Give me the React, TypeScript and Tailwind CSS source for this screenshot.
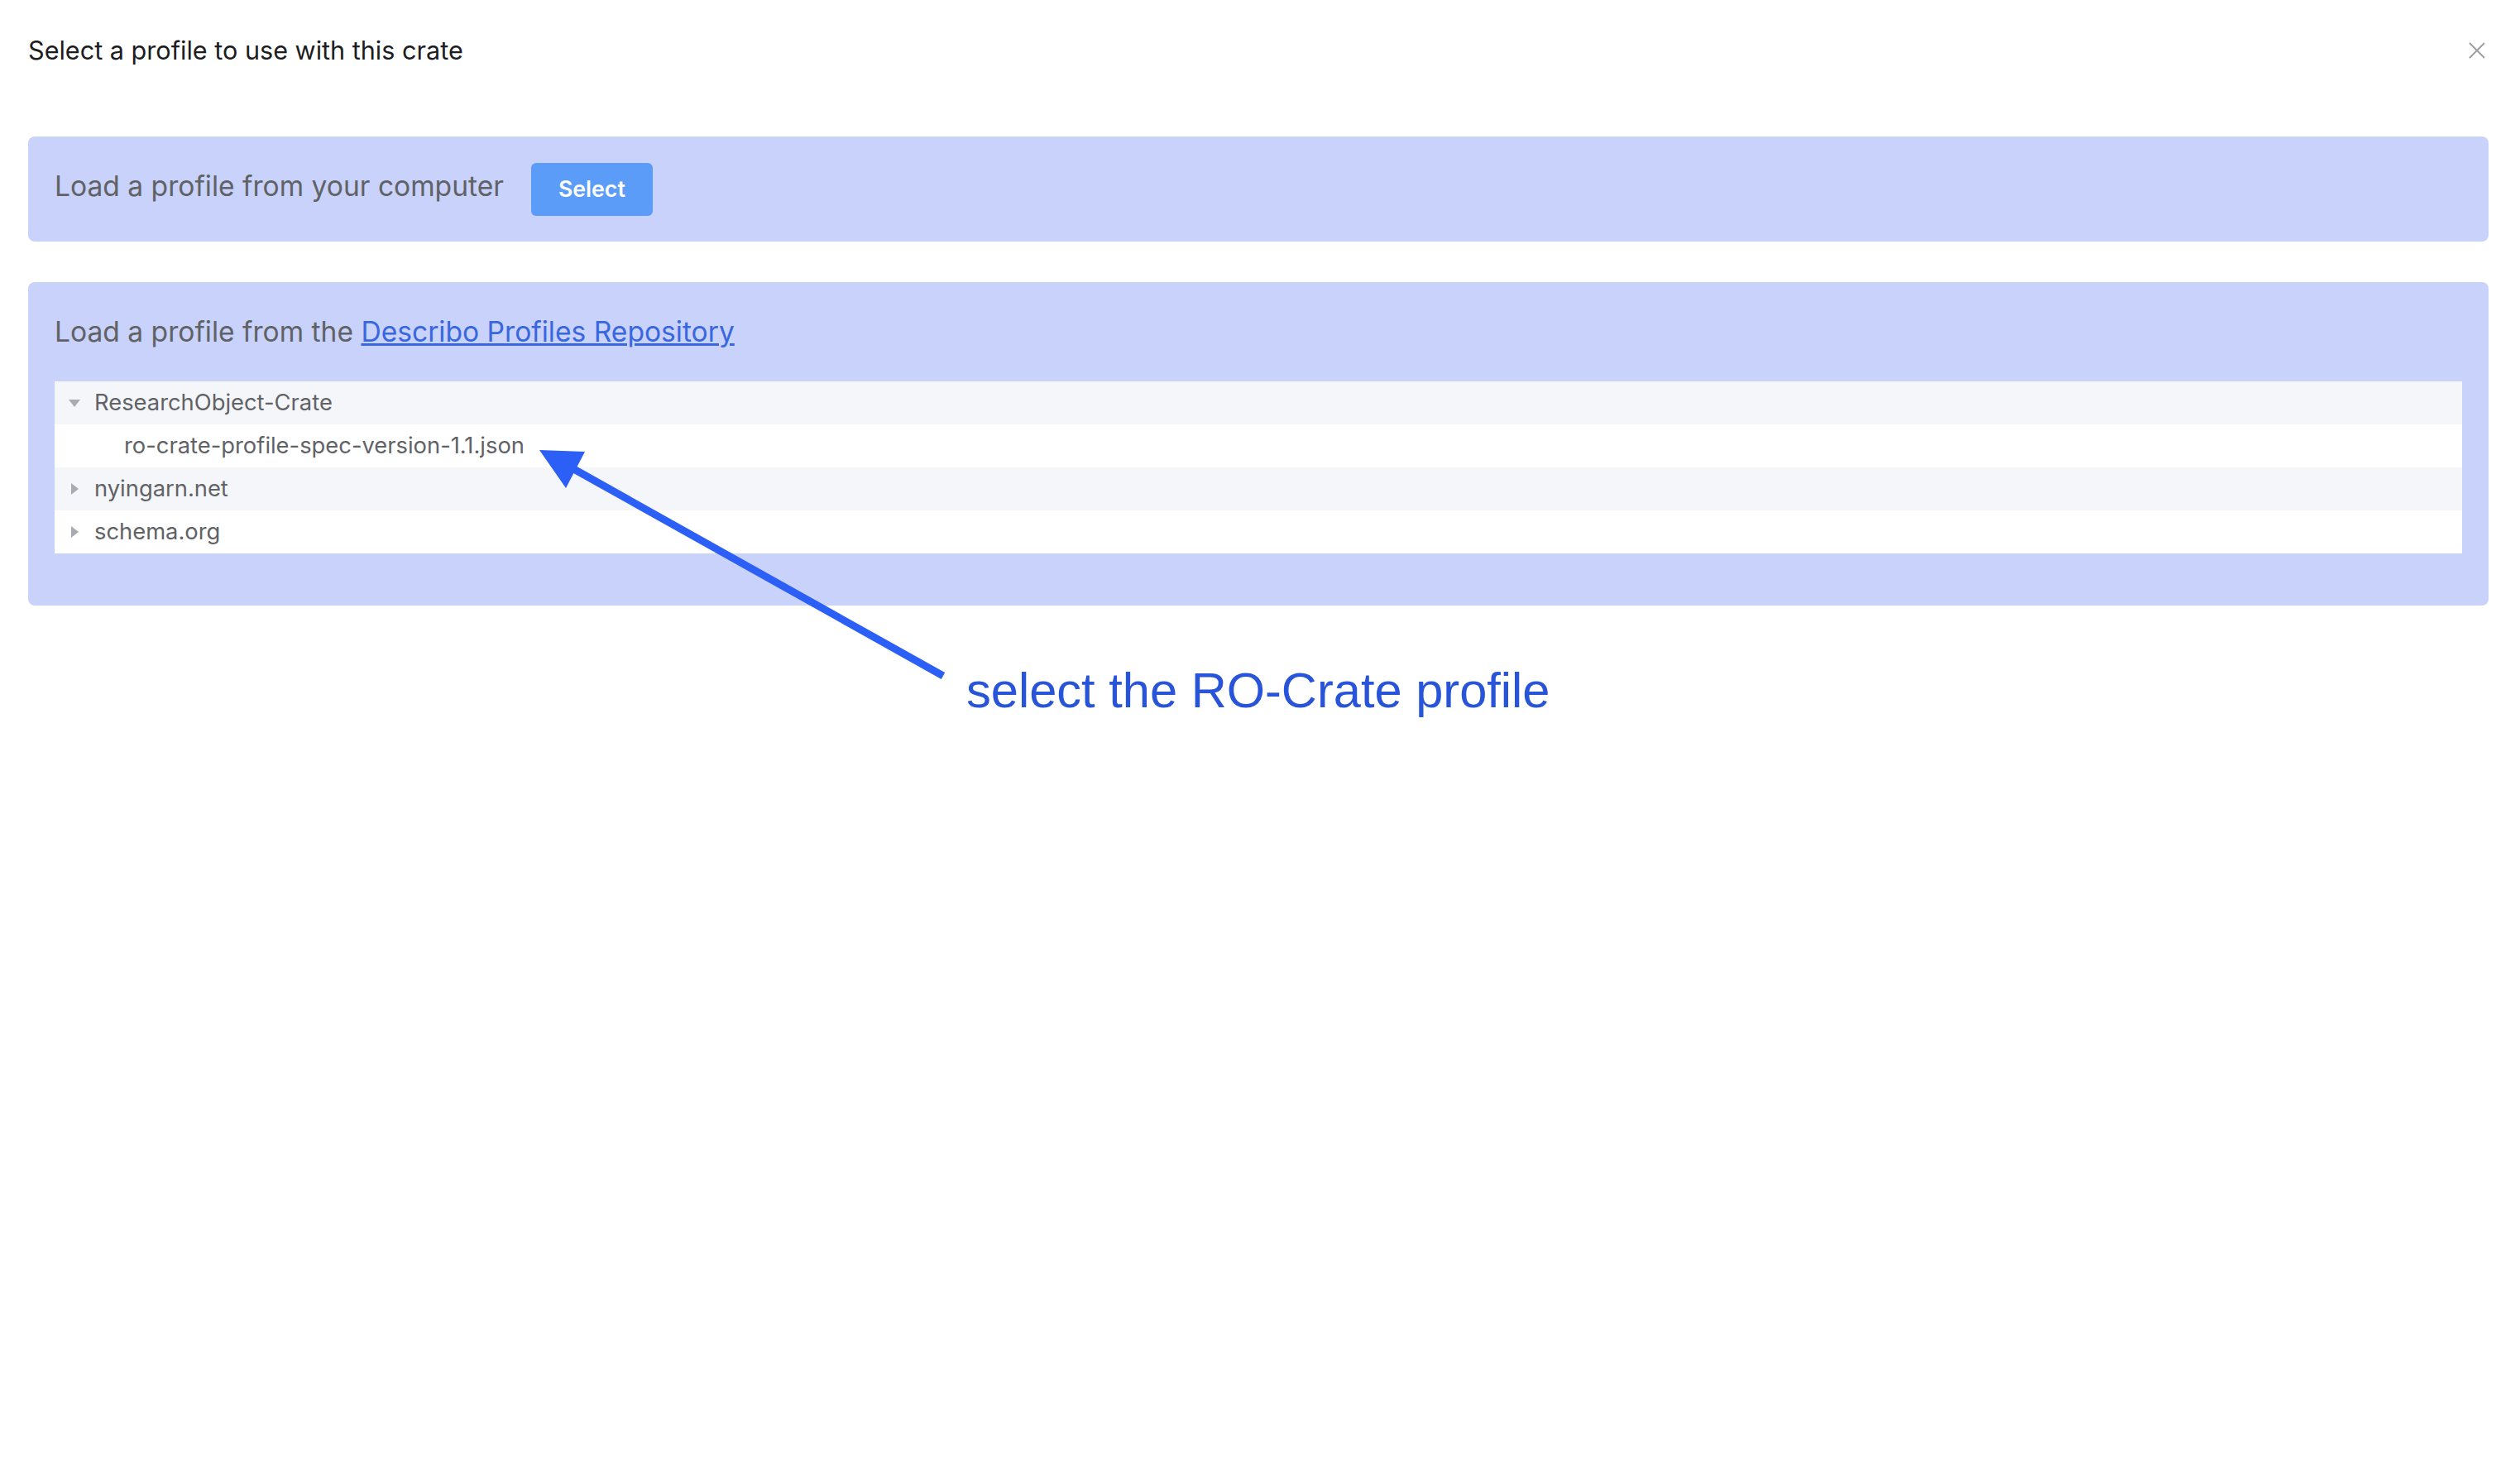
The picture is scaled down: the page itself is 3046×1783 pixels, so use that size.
const tree = [
  { name: 'ResearchObject-Crate', open: true, level: 0 },
  { name: 'ro-crate-profile-spec-version-1.1.json', open: false, level: 1 },
  { name: 'nyingarn.net', open: false, level: 0 },
  { name: 'schema.org', open: false, level: 0 },
]

export default function App() {
  return (
    <div className="relative h-screen w-full overflow-hidden bg-white font-['Inter',sans-serif]">
      <div className="pl-[34px] pr-[38px]">
        {/* header */}
        <div className="flex h-[122px] items-center justify-between">
          <h1 className="text-[30.6px] leading-none text-[#1d1d1f]">Select a profile to use with this crate</h1>
          <button className="mr-[2px] flex h-[24px] w-[24px] items-center justify-center" aria-label="close">
            <svg width="20" height="20" viewBox="0 0 20 20">
              <path d="M1 1 L19 19 M19 1 L1 19" stroke="#9a9ca1" strokeWidth="1.8" />
            </svg>
          </button>
        </div>

        {/* load from computer */}
        <div className="mt-[43px] flex h-[127px] items-center gap-[33px] rounded-[8px] bg-[#c9d2fa] px-[32px]">
          <span className="mb-[6px] text-[33.6px] text-[#606266]">Load a profile from your computer</span>
          <button className="h-[64px] w-[147px] rounded-[6px] bg-[#5a9cf8] text-[26.7px] font-semibold text-white">
            Select
          </button>
        </div>

        {/* load from repository */}
        <div className="mt-[49px] rounded-[8px] bg-[#c9d2fa] px-[32px] pb-[63px] pt-[36px]">
          <div className="text-[33.6px] leading-[48px] text-[#606266]">
            Load a profile from the{' '}
            <a
              href="#"
              className="text-[#3867e0] underline decoration-[3px] underline-offset-[2px]"
            >
              Describo Profiles Repository
            </a>
          </div>
          <div className="mt-[36px]">
            {tree.map((node, i) => (
              <div
                key={node.name}
                className={`flex h-[52px] items-center text-[27.35px] text-[#606266] ${i % 2 === 0 ? 'bg-[#f5f6fa]' : 'bg-white'} ${node.level === 1 ? 'pl-[36px]' : ''}`}
              >
                <span className="ml-[12px] mr-[12px] flex h-[24px] w-[24px] items-center justify-center">
                  {node.level === 0 && (
                    <svg width="14" height="14" viewBox="0 0 14 14" className={node.open ? 'rotate-90' : ''}>
                      <path d="M3 0 L12 7 L3 14 Z" fill="#a8abb2" />
                    </svg>
                  )}
                </span>
                <span>{node.name}</span>
              </div>
            ))}
          </div>
        </div>
      </div>

      {/* annotation arrow */}
      <svg className="pointer-events-none absolute left-0 top-0" width="3046" height="1783">
        <line x1="1140" y1="817" x2="690" y2="565" stroke="#2b5ff5" strokeWidth="9" />
        <polygon points="652,544 707,546 684,590" fill="#2b5ff5" />
      </svg>
      <div className="absolute left-[1168px] top-[805px] font-['Liberation_Sans',sans-serif] text-[59.6px] leading-none text-[#2754d8]">
        select the RO-Crate profile
      </div>
    </div>
  )
}
